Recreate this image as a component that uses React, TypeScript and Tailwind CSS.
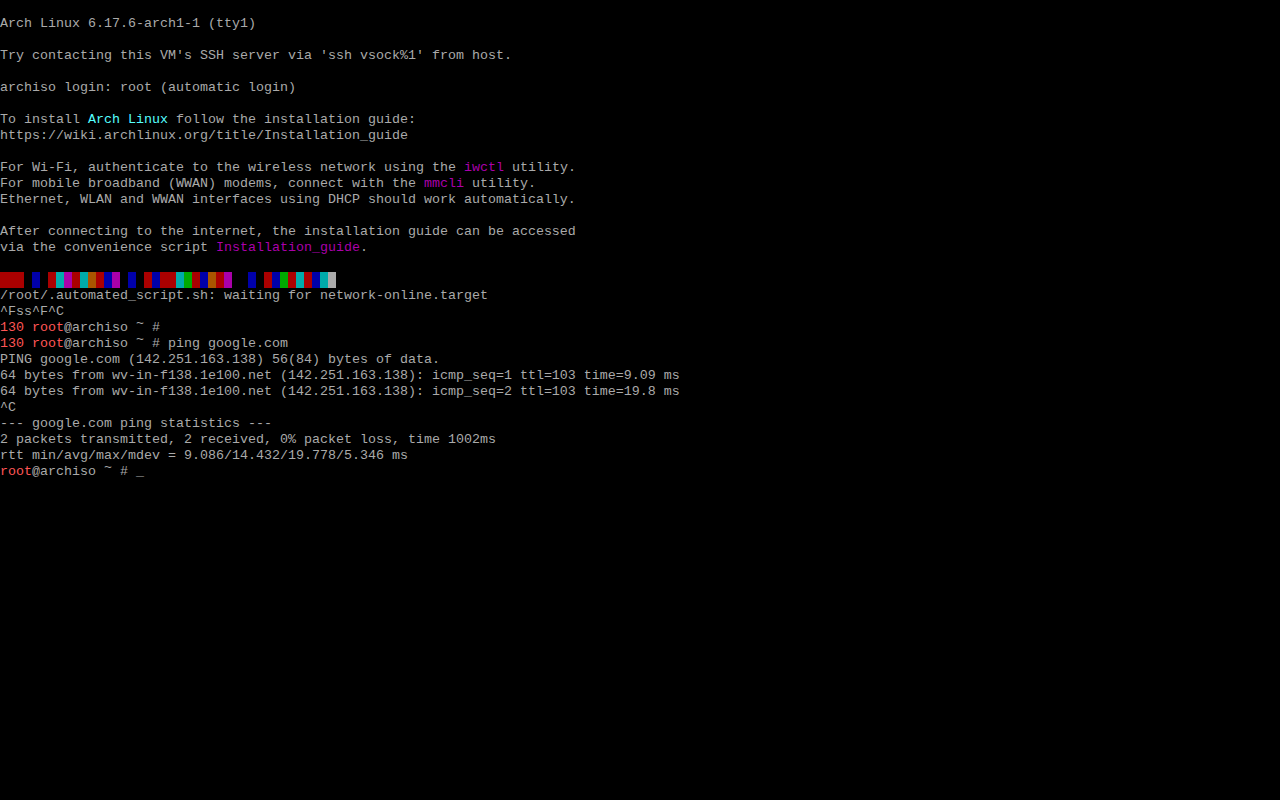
import React from "react";

type Seg = { t: string; c?: string };

const R = "text-[#ff5555]";
const CY = "text-[#55ffff]";
const MG = "text-[#aa00aa]";

// one entry per console row; null = blank row, "bar" = colour test row
const rows: (Seg[] | null | "bar")[] = [
  null,
  [{ t: "Arch Linux 6.17.6-arch1-1 (tty1)" }],
  null,
  [{ t: "Try contacting this VM's SSH server via 'ssh vsock%1' from host." }],
  null,
  [{ t: "archiso login: root (automatic login)" }],
  null,
  [{ t: "To install " }, { t: "Arch Linux", c: CY }, { t: " follow the installation guide:" }],
  [{ t: "https://wiki.archlinux.org/title/Installation_guide" }],
  null,
  [{ t: "For Wi-Fi, authenticate to the wireless network using the " }, { t: "iwctl", c: MG }, { t: " utility." }],
  [{ t: "For mobile broadband (WWAN) modems, connect with the " }, { t: "mmcli", c: MG }, { t: " utility." }],
  [{ t: "Ethernet, WLAN and WWAN interfaces using DHCP should work automatically." }],
  null,
  [{ t: "After connecting to the internet, the installation guide can be accessed" }],
  [{ t: "via the convenience script " }, { t: "Installation_guide", c: MG }, { t: "." }],
  null,
  "bar",
  [{ t: "/root/.automated_script.sh: waiting for network-online.target" }],
  [{ t: "^Fss^F^C" }],
  [{ t: "130 root", c: R }, { t: "@archiso " }, { t: "~", c: "tilde" }, { t: " #" }],
  [{ t: "130 root", c: R }, { t: "@archiso " }, { t: "~", c: "tilde" }, { t: " # ping google.com" }],
  [{ t: "PING google.com (142.251.163.138) 56(84) bytes of data." }],
  [{ t: "64 bytes from wv-in-f138.1e100.net (142.251.163.138): icmp_seq=1 ttl=103 time=9.09 ms" }],
  [{ t: "64 bytes from wv-in-f138.1e100.net (142.251.163.138): icmp_seq=2 ttl=103 time=19.8 ms" }],
  [{ t: "^C" }],
  [{ t: "--- google.com ping statistics ---" }],
  [{ t: "2 packets transmitted, 2 received, 0% packet loss, time 1002ms" }],
  [{ t: "rtt min/avg/max/mdev = 9.086/14.432/19.778/5.346 ms" }],
  [{ t: "root", c: R }, { t: "@archiso " }, { t: "~", c: "tilde" }, { t: " # " }, { t: "_", c: "cursor" }],
];

const barColors = [
  "bg-[#aa0000]", "bg-[#aa0000]", "bg-[#aa0000]", "bg-black", "bg-[#0000aa]", "bg-black",
  "bg-[#aa0000]", "bg-[#00aaaa]", "bg-[#aa00aa]", "bg-[#aa0000]", "bg-[#00aaaa]", "bg-[#aa5500]",
  "bg-[#aa0000]", "bg-[#0000aa]", "bg-[#aa00aa]", "bg-black", "bg-[#0000aa]", "bg-black",
  "bg-[#aa0000]", "bg-[#0000aa]", "bg-[#aa0000]", "bg-[#aa0000]", "bg-[#00aaaa]", "bg-[#00aa00]",
  "bg-[#aa0000]", "bg-[#0000aa]", "bg-[#aa5500]", "bg-[#aa0000]", "bg-[#aa00aa]", "bg-black",
  "bg-black", "bg-[#0000aa]", "bg-black", "bg-[#aa0000]", "bg-[#0000aa]", "bg-[#00aa00]",
  "bg-[#aa0000]", "bg-[#00aaaa]", "bg-[#aa0000]", "bg-[#0000aa]", "bg-[#00aaaa]", "bg-[#aaaaaa]",
];

function Segment({ s }: { s: Seg }) {
  // the VGA font draws ~ up high, nudge it without touching the line box
  if (s.c === "tilde") return <span className="relative -top-[4px]">{s.t}</span>;
  if (s.c === "cursor") return <span className="text-[#aaaaaa]">{s.t}</span>;
  return <span className={s.c}>{s.t}</span>;
}

export default function App() {
  return (
    <div className="h-[800px] w-full overflow-hidden bg-black text-[#aaaaaa] font-['Liberation_Mono',monospace] text-[13.333px] leading-4 whitespace-pre">
      {rows.map((row, i) => {
        if (row === null) return <div key={i} className="h-4" />;
        if (row === "bar")
          return (
            <div key={i} className="flex h-4">
              {barColors.map((c, j) => (
                <div key={j} className={`w-2 h-4 ${c}`} />
              ))}
            </div>
          );
        return (
          <div key={i} className="h-4">
            {row.map((s, j) => (
              <Segment key={j} s={s} />
            ))}
          </div>
        );
      })}
    </div>
  );
}
